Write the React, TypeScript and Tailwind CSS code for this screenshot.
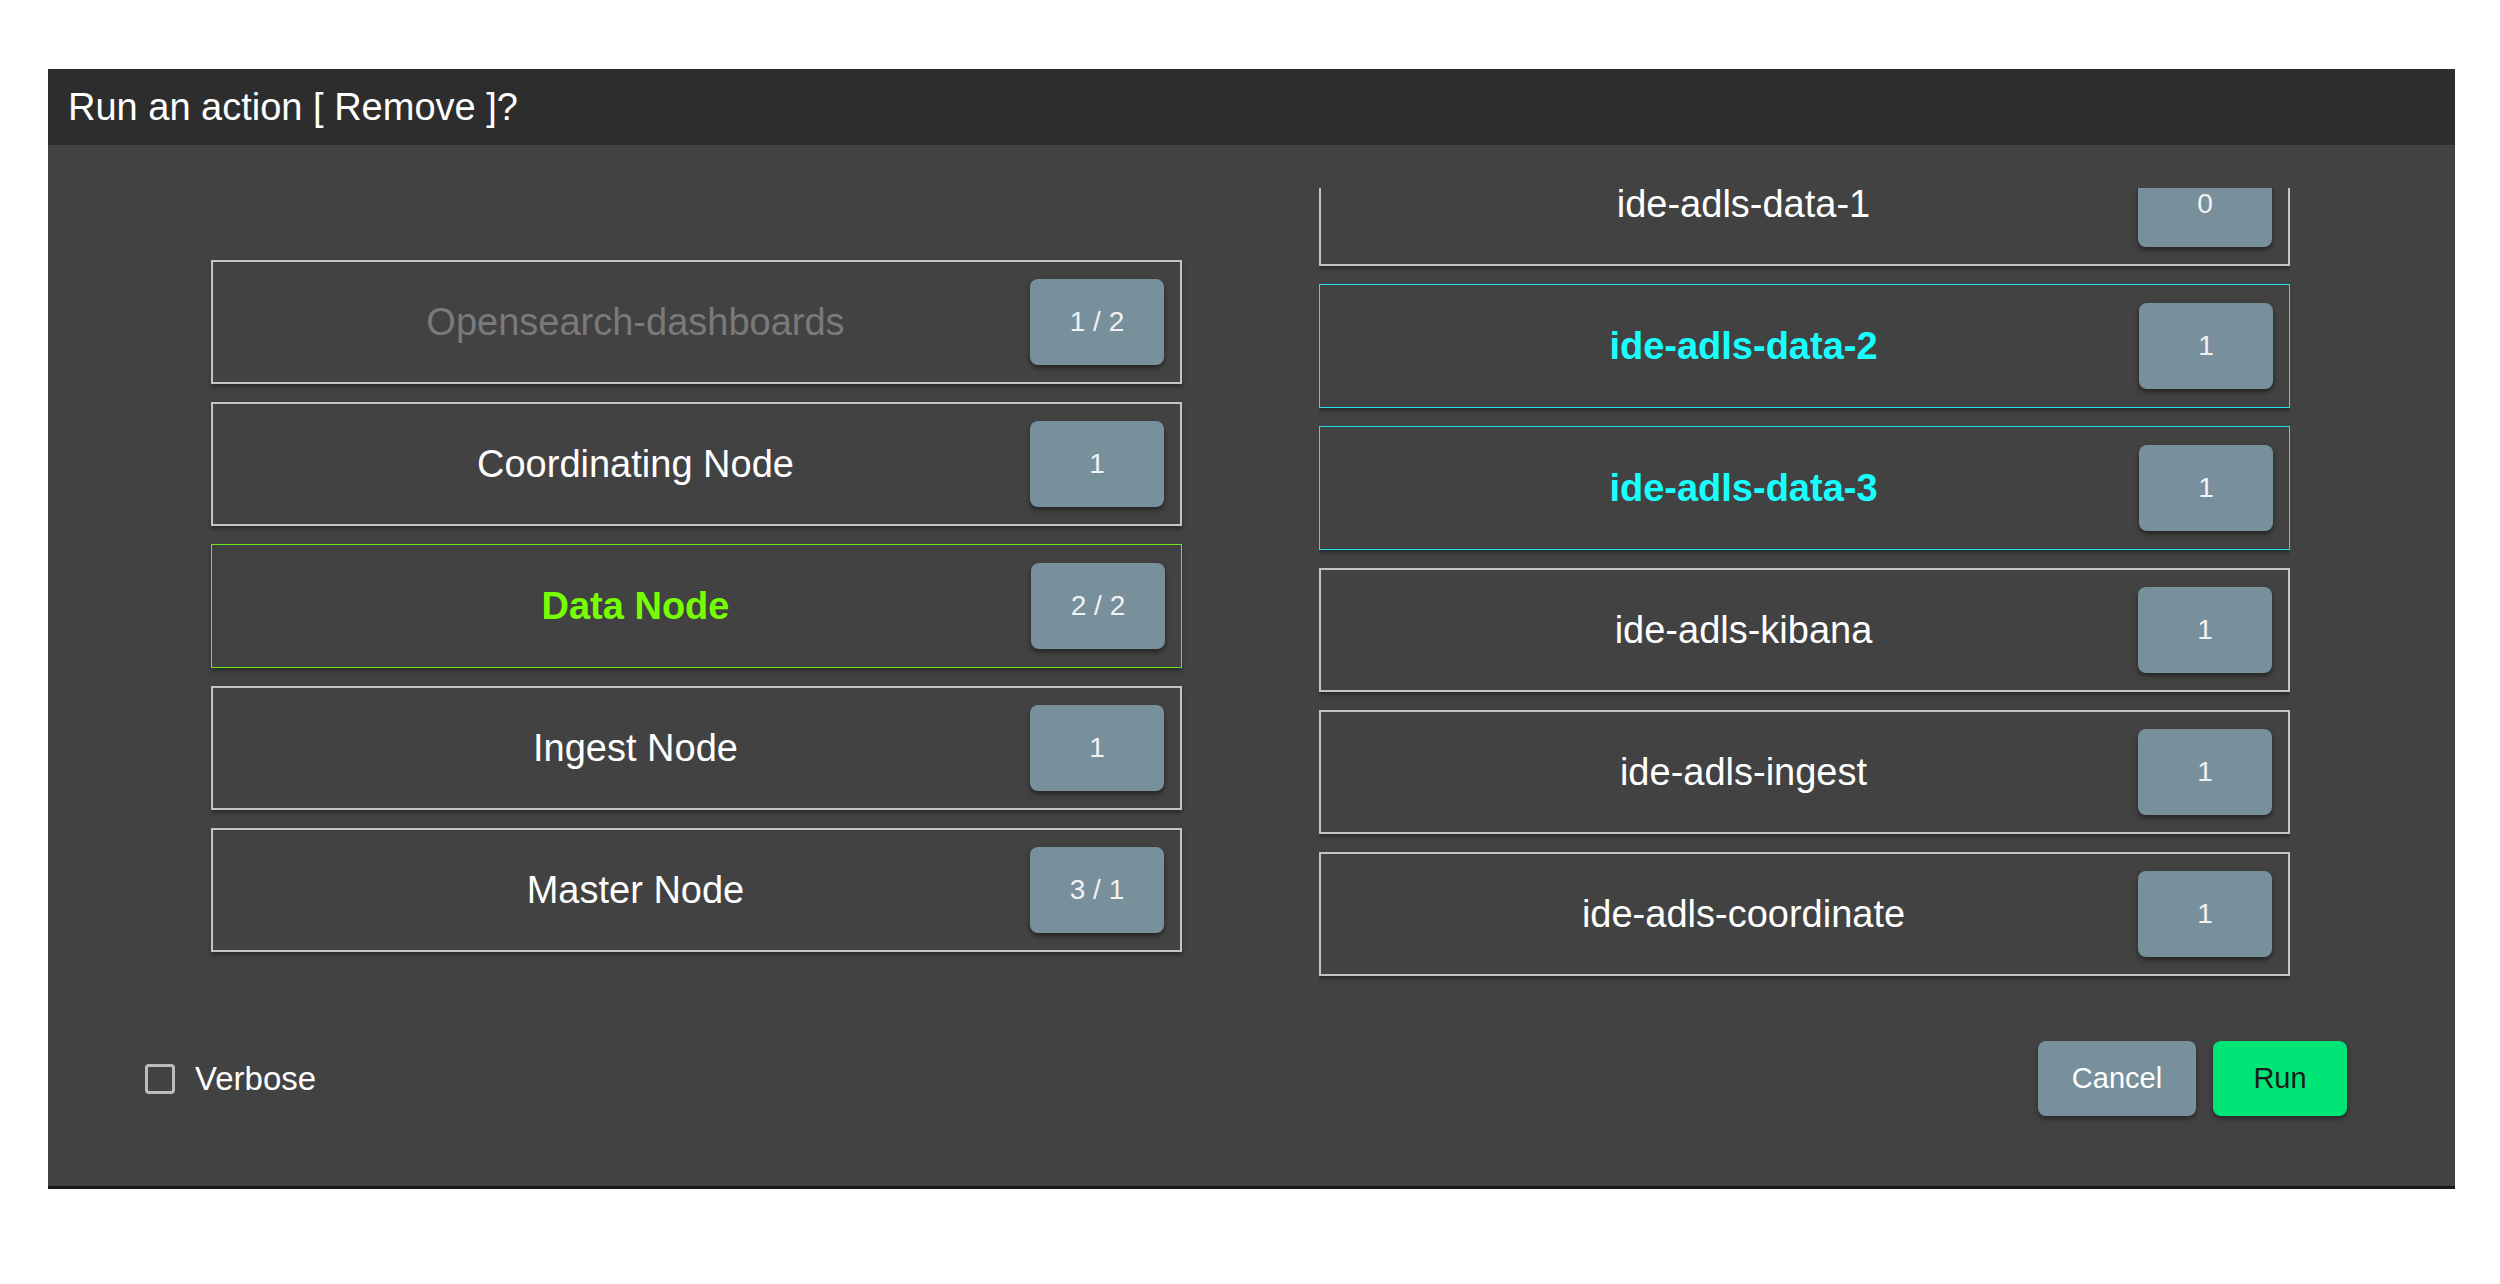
import React from 'react';

type Item = {
  name: string;
  count: string;
  tone?: 'muted' | 'green' | 'cyan';
};

const leftItems: Item[] = [
  { name: 'Opensearch-dashboards', count: '1 / 2', tone: 'muted' },
  { name: 'Coordinating Node', count: '1' },
  { name: 'Data Node', count: '2 / 2', tone: 'green' },
  { name: 'Ingest Node', count: '1' },
  { name: 'Master Node', count: '3 / 1' },
];

const rightItems: Item[] = [
  { name: 'ide-adls-data-1', count: '0' },
  { name: 'ide-adls-data-2', count: '1', tone: 'cyan' },
  { name: 'ide-adls-data-3', count: '1', tone: 'cyan' },
  { name: 'ide-adls-kibana', count: '1' },
  { name: 'ide-adls-ingest', count: '1' },
  { name: 'ide-adls-coordinate', count: '1' },
];

const NodeCard: React.FC<{ item: Item }> = ({ item }) => {
  let border = 'border-[#c4c4c4] border-2';
  let text = 'text-white';
  if (item.tone === 'green') {
    border = 'border-[#6fe51a] border';
    text = 'text-[#76ff03] font-bold';
  } else if (item.tone === 'cyan') {
    border = 'border-[#1ee3e8] border';
    text = 'text-[#18ffff] font-bold';
  } else if (item.tone === 'muted') {
    text = 'text-[#7a7a7a]';
  }

  return (
    <div className={`flex h-[124px] shrink-0 items-center gap-4 pl-[44px] pr-4 shadow-[0_3px_4px_rgba(0,0,0,0.35)] ${border}`}>
      <span className={`flex-1 text-center text-[38px] leading-none ${text}`}>{item.name}</span>
      <div className="flex h-[86px] w-[134px] items-center justify-center rounded-lg bg-[#78909c] text-[28px] text-[#f2f2f2] shadow-[0_3px_5px_rgba(0,0,0,0.45)]">
        {item.count}
      </div>
    </div>
  );
};

const App: React.FC = () => {
  return (
    <div className="min-h-screen w-full bg-white pt-[69px] font-['Liberation_Sans',Arial,sans-serif]">
      <div className="ml-[48px] w-[2407px] border-b-[3px] border-[#1a1a1a] bg-[#424242]">
        <div className="flex h-[76px] items-center bg-[#2d2d2d] px-5">
          <h1 className="text-[38px] text-white">Run an action [ Remove ]?</h1>
        </div>

        <div className="grid grid-cols-2 gap-x-[137px] pl-[163px] pr-[165px] pt-[43px]">
          <div className="flex h-[836px] flex-col justify-center gap-[18px]">
            {leftItems.map((item) => (
              <NodeCard key={item.name} item={item} />
            ))}
          </div>
          <div className="h-[836px] overflow-hidden">
            <div className="-mt-[46px] flex flex-col gap-[18px]">
              {rightItems.map((item) => (
                <NodeCard key={item.name} item={item} />
              ))}
            </div>
          </div>
        </div>

        <div className="flex items-center justify-between pb-[70px] pl-[97px] pr-[108px] pt-[17px]">
          <label className="flex items-center gap-[20px] text-[33px] text-white">
            <span className="h-[30px] w-[30px] rounded-[4px] border-[3px] border-[#bdbdbd]" />
            Verbose
          </label>
          <div className="flex gap-[17px]">
            <button className="h-[75px] w-[158px] rounded-lg bg-[#78909c] text-[29px] text-white shadow-[0_3px_5px_rgba(0,0,0,0.4)]">
              Cancel
            </button>
            <button className="h-[75px] w-[134px] rounded-lg bg-[#00e676] text-[29px] text-[#1c1c1c] shadow-[0_3px_5px_rgba(0,0,0,0.4)]">
              Run
            </button>
          </div>
        </div>
      </div>
    </div>
  );
};

export default App;
